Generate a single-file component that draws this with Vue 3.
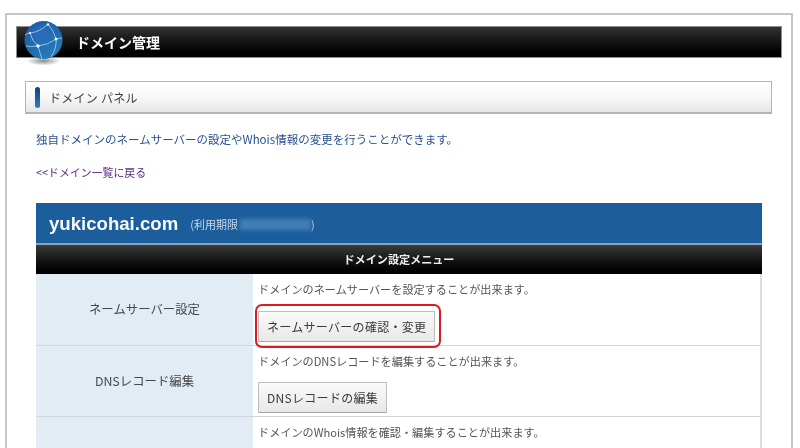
<script setup>
const rows = [
  { label: 'ネームサーバー設定', desc: 'ドメインのネームサーバーを設定することが出来ます。', btn: 'ネームサーバーの確認・変更', mark: true },
  { label: 'DNSレコード編集', desc: 'ドメインのDNSレコードを編集することが出来ます。', btn: 'DNSレコードの編集', mark: false },
  { label: '', desc: 'ドメインのWhois情報を確認・編集することが出来ます。', btn: '', mark: false },
]
</script>

<template>
  <div class="page">
    <div class="panel">
      <header class="head">
        <svg class="globe" viewBox="0 0 44 46" width="44" height="46">
          <defs>
            <radialGradient id="g" cx="0.4" cy="0.3" r="0.8">
              <stop offset="0" stop-color="#2a66b4" />
              <stop offset="0.6" stop-color="#1c539e" />
              <stop offset="1" stop-color="#123f80" />
            </radialGradient>
            <linearGradient id="c" x1="0.2" y1="0" x2="0.8" y2="1">
              <stop offset="0" stop-color="#2a7fc4" stop-opacity="0" />
              <stop offset="1" stop-color="#2a94cc" stop-opacity=".8" />
            </linearGradient>
            <radialGradient id="s" cx="0.5" cy="0.5" r="0.5">
              <stop offset="0" stop-color="#000" stop-opacity="0.45" />
              <stop offset="1" stop-color="#000" stop-opacity="0" />
            </radialGradient>
          </defs>
          <ellipse cx="20.5" cy="40" rx="17" ry="4.5" fill="url(#s)" />
          <circle cx="20.5" cy="19" r="19" fill="url(#g)" />
          <circle cx="20.5" cy="19" r="19" fill="url(#c)" />
          <g fill="none" stroke="#a9d8f0" stroke-width="1" opacity=".8">
            <path d="M2 14Q5 12 7 12Q17 11 25 3" />
            <path d="M7 12Q9 20 15 25" />
            <path d="M15 25Q25 24 33 18" />
            <path d="M25 3Q31 10 33 18" />
            <path d="M15 25Q6 26 3 25" />
            <path d="M15 25Q17 32 19 38" />
            <path d="M33 18Q34 27 28 36" />
            <path d="M33 18L39 17" />
          </g>
          <g fill="#e8f8ff">
            <circle cx="15" cy="25" r="1.7" />
            <circle cx="33" cy="18" r="1.5" />
            <circle cx="25" cy="3.5" r="1.2" />
            <circle cx="7" cy="12" r="1.1" />
          </g>
        </svg>
        <h1 class="head-title">ドメイン管理</h1>
      </header>

      <div class="section">
        <span class="section-mark"></span>
        <h2 class="section-title">ドメイン パネル</h2>
      </div>

      <p class="intro">独自ドメインのネームサーバーの設定やWhois情報の変更を行うことができます。</p>
      <a class="back">&lt;&lt;ドメイン一覧に戻る</a>

      <div class="card">
        <div class="domain">
          <strong class="domain-name">yukicohai.com</strong>
          <span class="term">(利用期限<span class="redacted"></span>)</span>
        </div>
        <div class="menu-head">ドメイン設定メニュー</div>
        <div v-for="row in rows" :key="row.desc" class="row">
          <div class="row-label">{{ row.label }}</div>
          <div class="row-body">
            <p class="row-desc">{{ row.desc }}</p>
            <div v-if="row.btn" class="btn-wrap">
              <button class="btn">{{ row.btn }}</button>
              <span v-if="row.mark" class="mark"></span>
            </div>
          </div>
        </div>
      </div>
    </div>
  </div>
</template>

<style scoped>
.page {
  width: 800px;
  height: 448px;
  overflow: hidden;
  background: #fff;
  padding: 13px 7px 0 5px;
  box-sizing: border-box;
  font-family: "Noto Sans CJK JP", "Liberation Sans", sans-serif;
  filter: blur(0.45px);
}
.panel {
  border: 2px solid #c6c6c6;
  border-bottom: 0;
  height: 460px;
  box-sizing: border-box;
  padding: 11px 9px 0 9px;
  background: #fff;
}
.head {
  position: relative;
  height: 32px;
  box-sizing: border-box;
  display: flex;
  align-items: center;
  padding-left: 59px;
  background: linear-gradient(#333 0, #1c1c1c 35%, #000 85%, #000 100%);
  border: 1px solid #8e8e8e;
}
.globe {
  position: absolute;
  left: 6px;
  top: -6px;
}
.head-title {
  margin: 0;
  font-size: 14px;
  font-weight: 700;
  line-height: 1;
  color: #fff;
}
.section {
  margin: 23px 10px 0 9px;
  height: 33px;
  box-sizing: border-box;
  border: 1px solid #b4b4b4;
  border-bottom-width: 2px;
  background: linear-gradient(#fff 0, #f8f8f8 50%, #e6e6e6 100%);
  display: flex;
  align-items: center;
  padding-left: 9px;
}
.section-mark {
  width: 5px;
  height: 21px;
  border-radius: 3px;
  background: linear-gradient(#123f7d, #2a7fc0);
}
.section-title {
  margin: 0 0 0 9px;
  font-size: 12px;
  font-weight: 400;
  color: #4a4048;
  letter-spacing: 0.25px;
}
.intro {
  margin: 16px 0 0 20px;
  font-size: 11.5px;
  line-height: 18px;
  color: #27518f;
}
.back {
  display: block;
  margin: 15px 0 0 20px;
  font-size: 10.9px;
  line-height: 18px;
  color: #5d2a86;
}
.card {
  margin: 22px 20px 0 20px;
}
.domain {
  height: 42px;
  background: #1c5e9c;
  border-bottom: 2px solid #8ea2b5;
  display: flex;
  align-items: center;
  padding: 2px 0 0 13px;
  box-sizing: border-box;
  color: #fff;
}
.domain-name {
  font-family: "Liberation Sans", sans-serif;
  font-size: 18.6px;
  font-weight: 700;
  color: #f4f8fb;
}
.term {
  margin-left: 12px;
  font-size: 11px;
  color: #c9d8e8;
  display: flex;
  align-items: center;
}
.redacted {
  display: inline-block;
  width: 71px;
  height: 11px;
  margin-left: 2px;
  background: #437fb5;
  filter: blur(2px);
}
.menu-head {
  height: 29px;
  line-height: 28px;
  text-align: center;
  font-size: 11.1px;
  font-weight: 700;
  color: #f0f0f0;
  background: linear-gradient(#3b3b3b 0, #161616 50%, #000 90%);
  box-sizing: border-box;
}
.row {
  display: flex;
  height: 71.5px;
  border-bottom: 1px solid #d2d6da;
  box-sizing: border-box;
}
.row-label {
  width: 217px;
  flex: none;
  background: #e2ecf5;
  display: flex;
  align-items: center;
  justify-content: center;
  font-size: 12.4px;
  color: #484848;
  box-sizing: border-box;
}
.row-body {
  flex: 1;
  padding: 6px 0 0 5px;
  border-right: 2px solid #dedede;
}
.row-desc {
  margin: 0;
  font-size: 11.15px;
  line-height: 18px;
  color: #555;
}
.btn-wrap {
  position: relative;
  display: inline-block;
  margin-top: 12.7px;
}
.btn {
  display: block;
  height: 31px;
  padding: 0 8px;
  border: 1px solid #bdbdbd;
  border-bottom-color: #a8a8a8;
  border-radius: 1px;
  background: linear-gradient(#fafafa, #e8e8e8);
  font-family: inherit;
  font-size: 12px;
  letter-spacing: 0.3px;
  color: #3a3a3a;
  white-space: nowrap;
}
.mark {
  position: absolute;
  left: -3px;
  right: -6px;
  top: -7px;
  bottom: -6px;
  border: 2px solid #dc1a22;
  border-radius: 7px;
}
</style>
